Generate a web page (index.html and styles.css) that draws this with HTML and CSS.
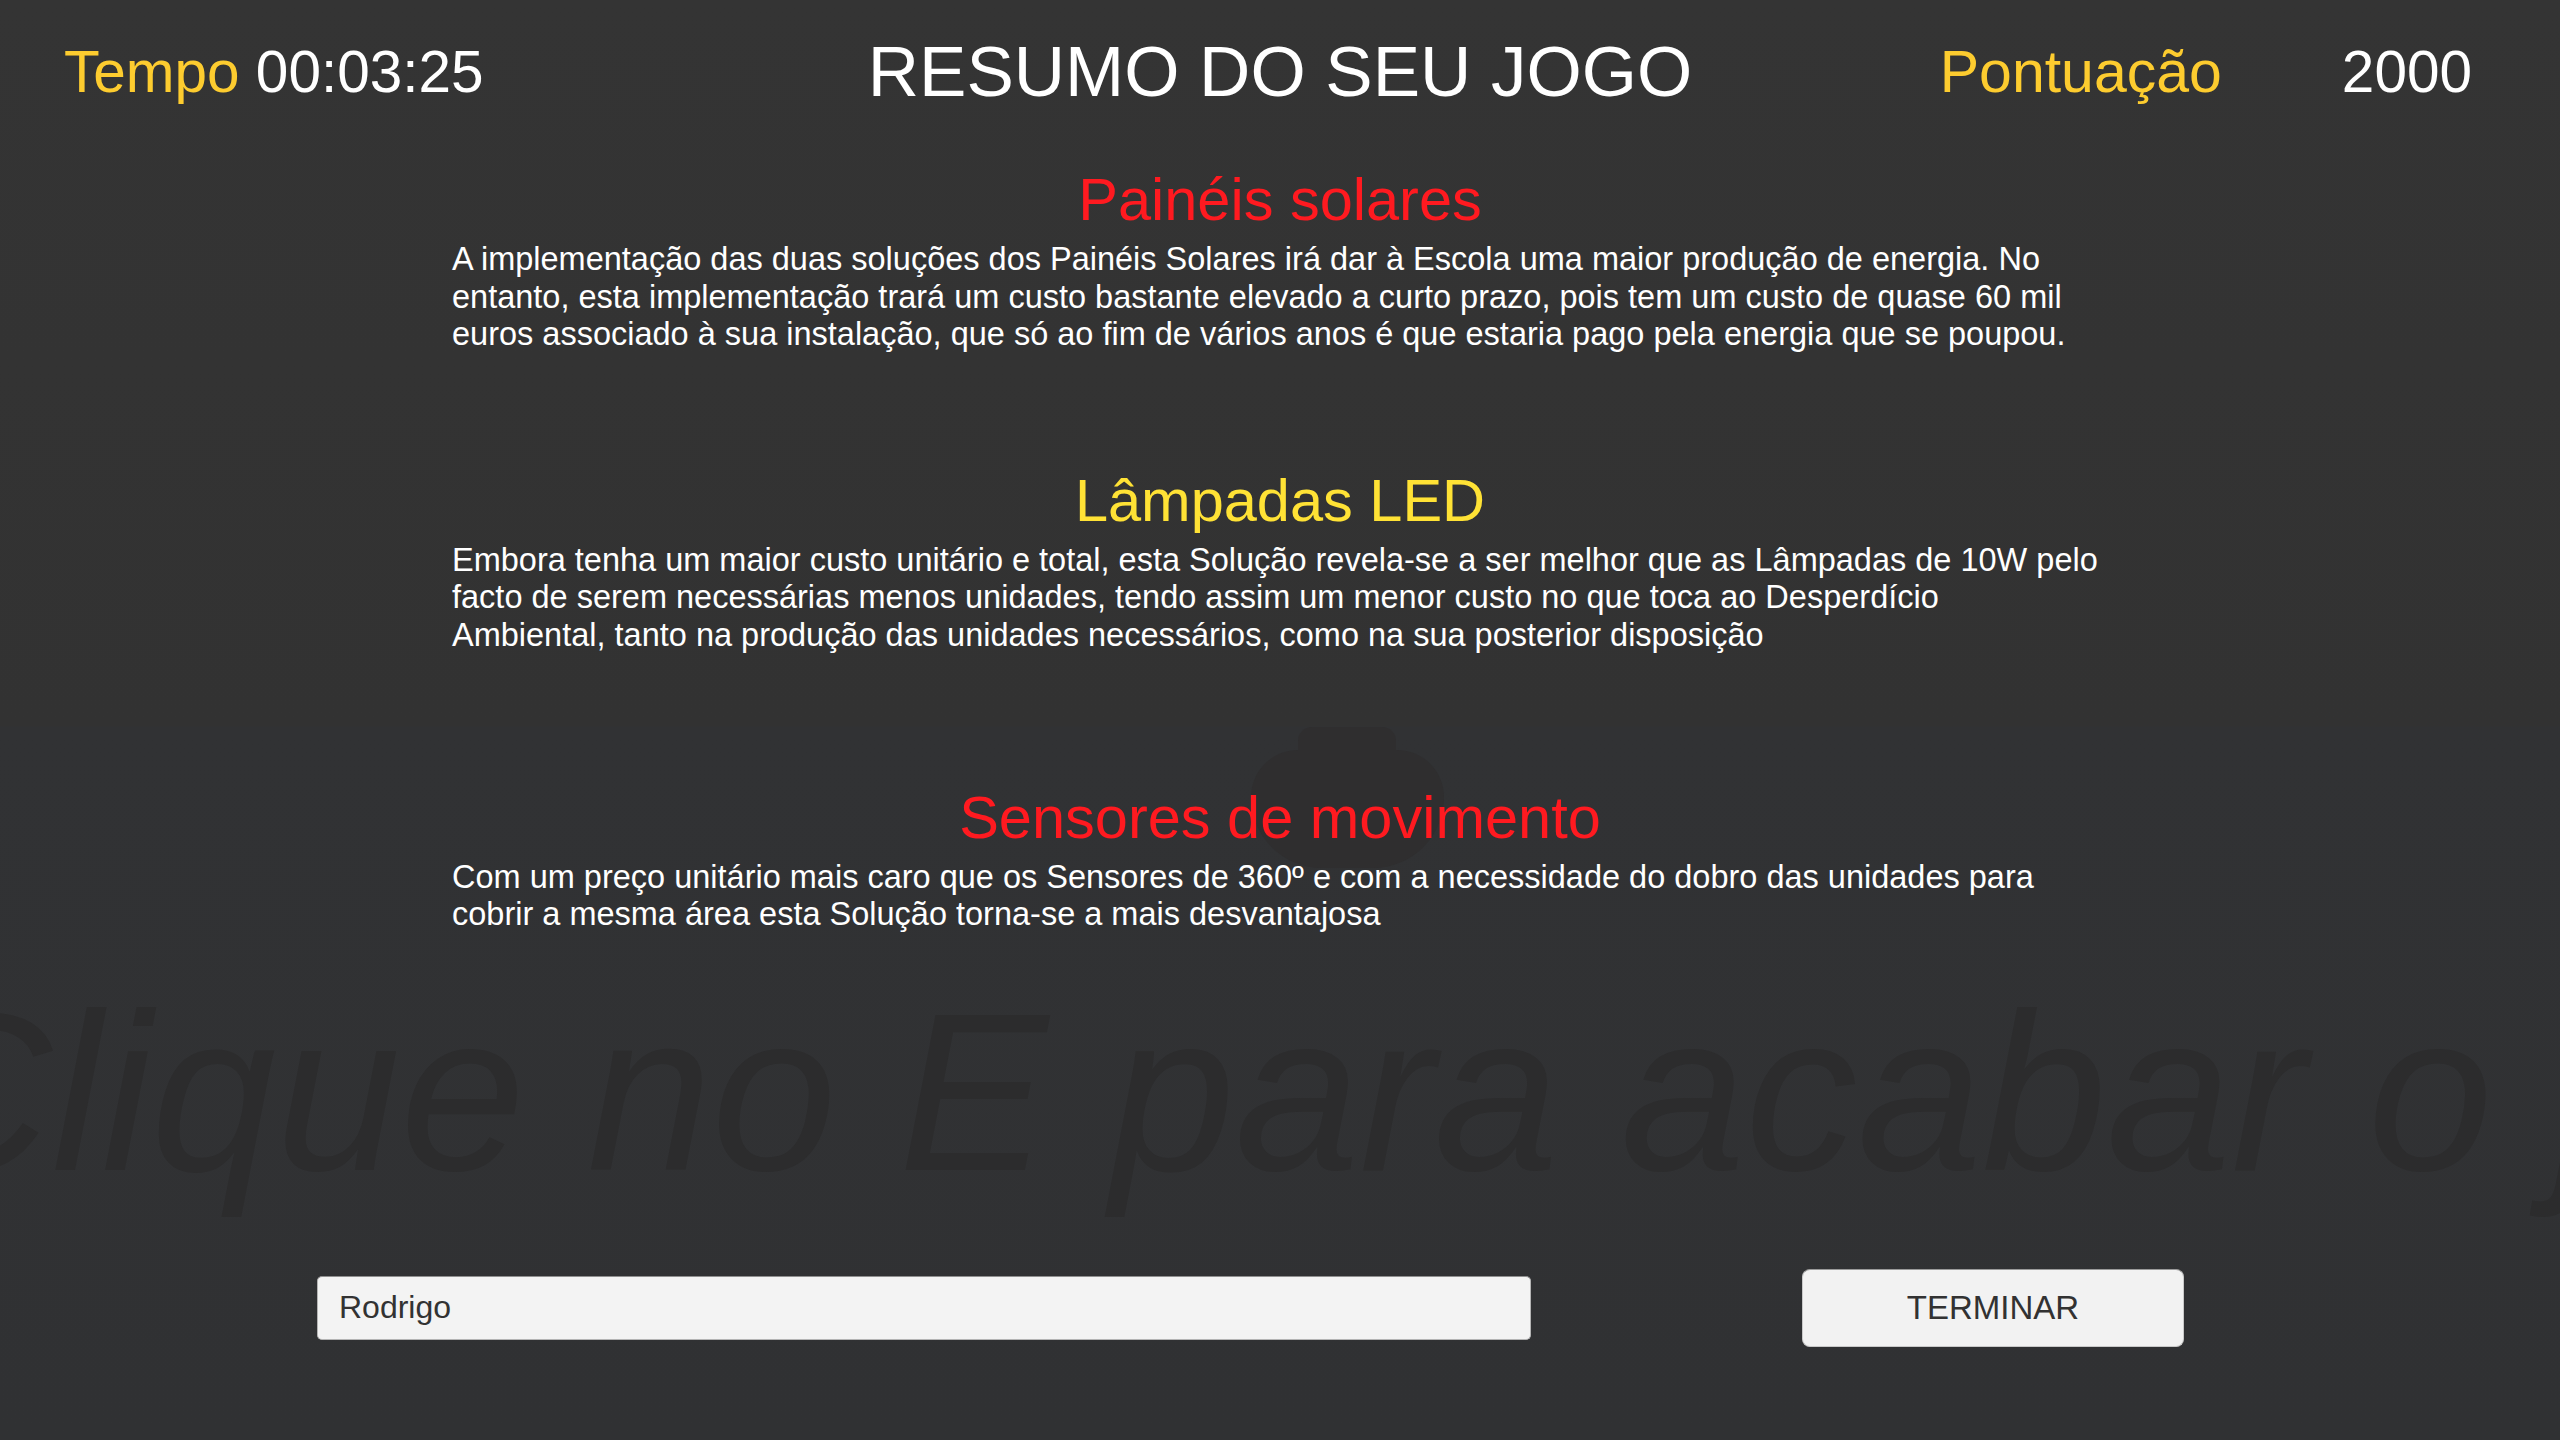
FILE: index.html
```html
<!DOCTYPE html>
<html lang="pt">
<head>
<meta charset="utf-8">
<title>Resumo do seu jogo</title>
<link rel="stylesheet" href="styles.css">
</head>
<body>
<div class="screen">
  <div class="bg-hint">Clique no E para acabar o jogo</div>
  <div class="bg-figure"><div class="bg-figure-head"></div></div>

  <header class="topbar">
    <div class="timer"><span class="label">Tempo</span> <span class="value">00:03:25</span></div>
    <h1 class="title">RESUMO DO SEU JOGO</h1>
    <div class="score"><span class="label label-score">Pontuação</span><span class="value">2000</span></div>
  </header>

  <section class="item item-first">
    <h2 class="item-title red">Painéis solares</h2>
    <p class="item-text">A implementação das duas soluções dos Painéis Solares irá dar à Escola uma maior produção de energia. No<br>entanto, esta implementação trará um custo bastante elevado a curto prazo, pois tem um custo de quase 60 mil<br>euros associado à sua instalação, que só ao fim de vários anos é que estaria pago pela energia que se poupou.</p>
  </section>

  <section class="item item-second">
    <h2 class="item-title yellow">Lâmpadas LED</h2>
    <p class="item-text">Embora tenha um maior custo unitário e total, esta Solução revela-se a ser melhor que as Lâmpadas de 10W pelo<br>facto de serem necessárias menos unidades, tendo assim um menor custo no que toca ao Desperdício<br>Ambiental, tanto na produção das unidades necessários, como na sua posterior disposição</p>
  </section>

  <section class="item item-third">
    <h2 class="item-title red">Sensores de movimento</h2>
    <p class="item-text">Com um preço unitário mais caro que os Sensores de 360º e com a necessidade do dobro das unidades para<br>cobrir a mesma área esta Solução torna-se a mais desvantajosa</p>
  </section>

  <div class="controls">
    <input class="name-field" type="text" value="Rodrigo">
    <button class="finish-btn" type="button">TERMINAR</button>
  </div>
</div>
</body>
</html>
```

FILE: styles.css
```css
html, body {
  margin: 0;
  padding: 0;
}

body {
  width: 2560px;
  height: 1440px;
  overflow: hidden;
  font-family: "Liberation Sans", Arial, sans-serif;
  background: linear-gradient(to bottom, #343434 0, #323232 726px, #313234 727px, #303133 1440px);
  color: #ffffff;
}

.screen {
  position: relative;
  width: 2560px;
  height: 1440px;
  display: flex;
  flex-direction: column;
  overflow: hidden;
}

/* faint world-space hint behind the UI */
.bg-hint {
  position: absolute;
  left: -110px;
  top: 980px;
  font-size: 224px;
  line-height: 224px;
  font-style: italic;
  color: #2c2c2d;
  white-space: nowrap;
  z-index: 0;
}

.bg-figure {
  position: absolute;
  left: 1251px;
  top: 750px;
  width: 193px;
  height: 118px;
  background: #2f2e2f;
  border-radius: 60px 60px 90px 90px;
  z-index: 0;
}

.bg-figure-head {
  position: absolute;
  left: 47px;
  top: -23px;
  width: 98px;
  height: 40px;
  background: #2f2e2f;
  border-radius: 14px 14px 0 0;
}

.topbar,
.item,
.controls {
  position: relative;
  z-index: 1;
}

.topbar {
  display: grid;
  grid-template-columns: 1fr auto 1fr;
  align-items: start;
  padding: 36px 64px 0 64px;
}

.timer,
.score {
  margin-top: 7px;
  font-size: 58.5px;
  line-height: 58px;
  white-space: nowrap;
}

.score {
  justify-self: end;
  display: flex;
  align-items: baseline;
  gap: 120px;
  margin-right: 24px;
}

.label {
  color: #fdcc2f;
}

.label-score {
  font-size: 59px;
}

.value {
  color: #ffffff;
}

.title {
  margin: 0;
  font-size: 71px;
  line-height: 71px;
  font-weight: normal;
  color: #ffffff;
  white-space: nowrap;
}

.item {
  width: 1656px;
  margin: 0 auto;
}

.item-first { margin-top: 64px; }
.item-second { margin-top: 118px; }
.item-third { margin-top: 134px; }

.item-title {
  margin: 0;
  font-size: 59.5px;
  line-height: 58px;
  font-weight: normal;
  text-align: center;
  white-space: nowrap;
}

.red { color: #ff1a20; }
.yellow { color: #ffe235; }

.item-text {
  margin: 12px 0 0 0;
  font-size: 32.5px;
  line-height: 37.6px;
  color: #ffffff;
  white-space: nowrap;
}

.controls {
  margin-top: 335px;
  padding-left: 317px;
  display: flex;
  align-items: center;
  gap: 271px;
}

.name-field {
  box-sizing: border-box;
  width: 1214px;
  height: 64px;
  margin: 0;
  padding: 0 0 0 21px;
  font-family: "Liberation Sans", Arial, sans-serif;
  font-size: 32px;
  color: #323232;
  background: #f3f3f3;
  border: 1px solid #b4b4b4;
  border-top-color: #8f8f8f;
  border-radius: 5px;
  outline: none;
}

.finish-btn {
  box-sizing: border-box;
  width: 382px;
  height: 78px;
  margin: 0;
  padding: 0;
  font-family: "Liberation Sans", Arial, sans-serif;
  font-size: 33px;
  color: #323232;
  background: #f2f2f2;
  border: 1px solid #c9c9c9;
  border-top-color: #9a9a9a;
  border-radius: 8px;
}
```
